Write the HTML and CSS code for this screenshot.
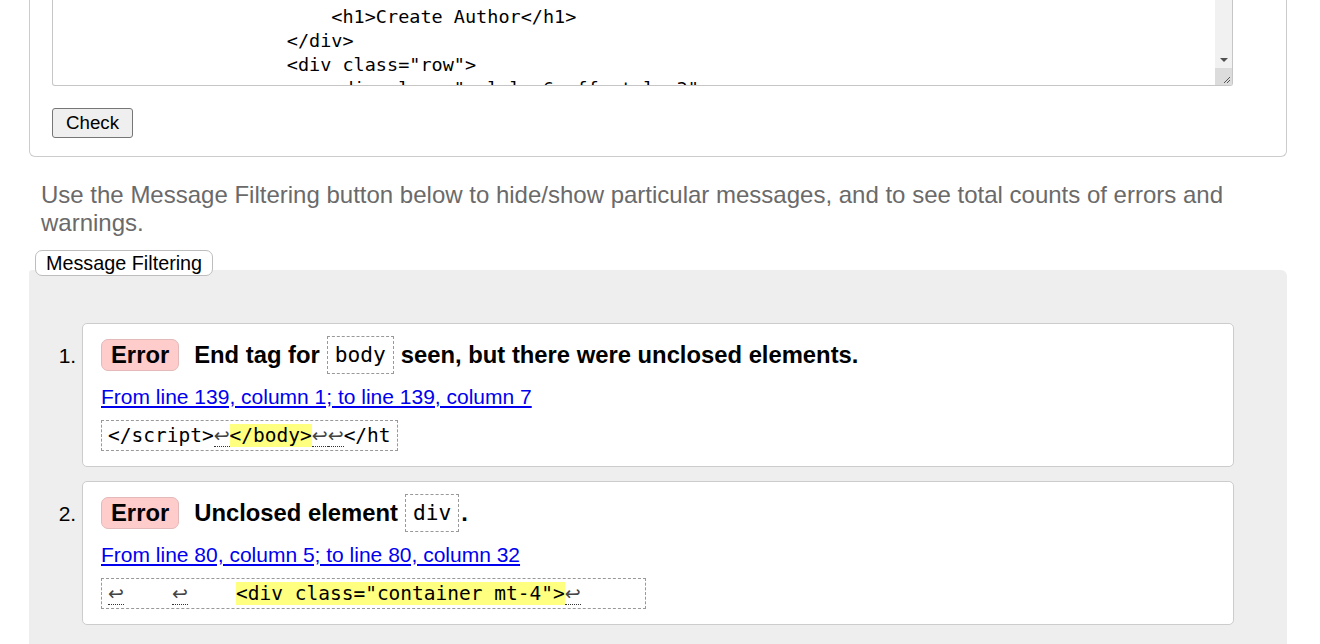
FILE: index.html
```html
<!DOCTYPE html>
<html lang="en">
<head>
<meta charset="utf-8">
<title>Nu Html Checker</title>
<link rel="stylesheet" href="styles.css">
</head>
<body>
<div class="page">
  <section class="form-card">
    <div class="source">
      <pre class="source-text">                    &lt;div class="col-md-12 text-center"&gt;
                        &lt;h1&gt;Create Author&lt;/h1&gt;
                    &lt;/div&gt;
                    &lt;div class="row"&gt;
                        &lt;div class="col-lg-6 offset-lg-3"&gt;</pre>
      <div class="scrollbar">
        <span class="track"></span>
        <span class="arrow"><span class="tri"></span></span>
        <span class="resizer"><svg width="17" height="17" viewBox="0 0 17 17"><path d="M15 9 L9 15 M15 12 L12 15" stroke="#555" stroke-width="1" fill="none"/></svg></span>
      </div>
    </div>
    <button class="check-btn" type="button">Check</button>
  </section>

  <p class="hint">Use the Message Filtering button below to hide/show particular messages, and to see total counts of errors and warnings.</p>
  <button class="filter-btn" type="button">Message Filtering</button>

  <section class="results">
    <ol class="messages">
      <li>
        <div class="msg">
          <p class="msg-title"><strong class="badge">Error</strong><span>End tag for</span><code class="tag">body</code><span>seen, but there were unclosed elements.</span></p>
          <a class="loc" href="#l139">From line 139, column 1; to line 139, column 7</a>
          <code class="extract">&lt;/script&gt;<span class="lf">↩</span><b class="hl">&lt;/body&gt;</b><span class="lf">↩</span><span class="lf">↩</span>&lt;/ht</code>
        </div>
      </li>
      <li>
        <div class="msg">
          <p class="msg-title"><strong class="badge">Error</strong><span>Unclosed element</span><code class="tag tag-end">div</code><span>.</span></p>
          <a class="loc" href="#l80">From line 80, column 5; to line 80, column 32</a>
          <code class="extract"><span class="lf">↩</span>	<span class="lf">↩</span>	<b class="hl">&lt;div class="container mt-4"&gt;</b><span class="lf">↩</span>     </code>
        </div>
      </li>
    </ol>
  </section>
</div>
</body>
</html>
```

FILE: styles.css
```css
html, body {
  margin: 0;
  padding: 0;
  background: #fff;
}

body {
  font-family: "Liberation Sans", Arial, sans-serif;
  color: #000;
  overflow: hidden;
}

.page {
  padding: 0 33px 0 29px;
}

.form-card {
  border: 1px solid #cccccc;
  border-top: 0;
  border-radius: 0 0 6px 6px;
  padding: 0 0 18px 22px;
}

.source {
  display: flex;
  width: 1179px;
  height: 85px;
  border: 1px solid #c6c6c6;
  border-top: 0;
  border-radius: 0 0 3px 3px;
  overflow: hidden;
  background: #fff;
}

.source-text {
  flex: 1;
  margin: 0;
  padding: 0 0 0 11px;
  overflow: hidden;
  font-family: "DejaVu Sans Mono", monospace;
  font-size: 18.5px;
  line-height: 24px;
  color: #000;
  white-space: pre;
}

.source-text::before {
  content: "";
  display: block;
  margin-top: -19px;
}

.scrollbar {
  width: 17px;
  display: flex;
  flex-direction: column;
  background: #f1f1f1;
}

.track {
  flex: 1;
}

.arrow {
  height: 17px;
  display: flex;
  align-items: center;
  justify-content: center;
}

.tri {
  width: 0;
  height: 0;
  border-left: 4px solid transparent;
  border-right: 4px solid transparent;
  border-top: 4px solid #505050;
}

.resizer {
  height: 17px;
  background: #dcdcdc;
  display: block;
}

.resizer svg {
  display: block;
}

.check-btn {
  display: block;
  margin-top: 22px;
  height: 30px;
  padding: 0 13px;
  font-family: "Liberation Sans", Arial, sans-serif;
  font-size: 18.7px;
  color: #000;
  background: #efefef;
  border: 1px solid #767676;
  border-radius: 3px;
}

.hint {
  margin: 24px 0 0 12px;
  font-size: 24px;
  line-height: 28px;
  color: #6a6a6a;
}

.filter-btn {
  position: relative;
  z-index: 1;
  display: block;
  margin: 13px 0 -6px 6px;
  height: 26px;
  padding: 0 10px;
  font-family: "Liberation Sans", Arial, sans-serif;
  font-size: 19.8px;
  color: #000;
  background: #fff;
  border: 1px solid #bdbdbd;
  border-radius: 7px;
}

.results {
  background: #eeeeee;
  border-radius: 3px 6px 0 0;
  padding: 53px 53px 30px 53px;
}

.messages {
  margin: 0;
  padding: 0;
  list-style: decimal outside;
  font-size: 21px;
}

.messages li {
  margin-bottom: 14px;
}

.msg {
  background: #fff;
  border: 1px solid #cccccc;
  border-radius: 5px;
  padding: 12px 18px 15px;
}

.msg-title {
  margin: 0;
  display: flex;
  align-items: center;
  height: 38px;
  font-size: 23.8px;
  font-weight: bold;
}

.badge {
  display: block;
  height: 30px;
  line-height: 30px;
  padding: 0 9px;
  margin-right: 15px;
  background: #ffcccc;
  border: 1px solid #e3b9b9;
  border-radius: 7px;
}

.tag {
  display: block;
  height: 36px;
  line-height: 36px;
  padding: 0 7px;
  margin: 0 7px 0 7px;
  border: 1px dashed #999;
  font-family: "DejaVu Sans Mono", monospace;
  font-size: 21.2px;
  font-weight: normal;
}

.tag-end {
  margin-right: 2px;
}

.loc {
  display: block;
  width: fit-content;
  margin-top: 11px;
  line-height: 24px;
  color: #0000ee;
  text-decoration: underline;
}

.extract {
  display: block;
  width: fit-content;
  margin-top: 11px;
  padding: 0 6px;
  border: 1px dashed #999;
  font-family: "DejaVu Sans Mono", monospace;
  font-size: 19.5px;
  line-height: 28px;
  white-space: pre;
  tab-size: 64px;
}

.hl {
  font-weight: normal;
  background: #ffff80;
}

.lf {
  font-family: "DejaVu Sans", sans-serif;
  font-size: 19px;
  color: #444;
  border-bottom: 1px dotted #333;
}
```
